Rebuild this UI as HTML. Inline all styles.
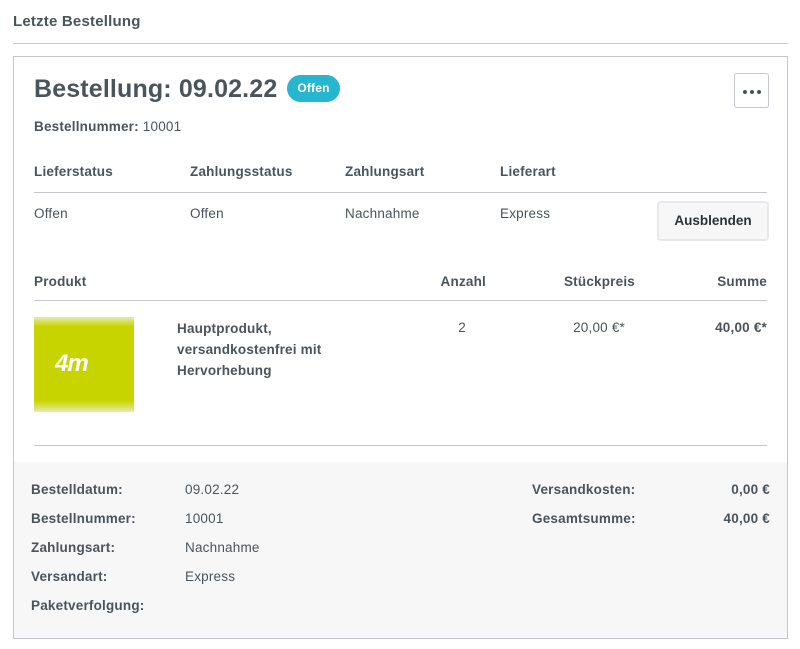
<!DOCTYPE html>
<html><head><meta charset="utf-8"><style>
*{margin:0;padding:0;box-sizing:border-box}
body{width:800px;height:649px;background:#fff;font-family:"Liberation Sans",Arial,sans-serif;color:#4a545b;position:relative;overflow:hidden}
.a{position:absolute;white-space:nowrap;font-size:13.5px;line-height:16px;letter-spacing:0.2px}
b{font-weight:bold}
.r{text-align:right}
.line{position:absolute;height:1px;background:#c4c7cc}
.dot{position:absolute;top:16px;width:4px;height:4px;border-radius:2px;background:#4a545b}
</style></head><body>
<div class="a" style="left:13px;top:14px;font-size:15px;font-weight:bold">Letzte Bestellung</div>
<div class="line" style="left:13px;top:43px;width:775px"></div>
<div style="position:absolute;left:13px;top:56px;width:775px;height:583px;border:1px solid #c4c7cc"></div>
<div style="position:absolute;left:14px;top:462px;width:773px;height:176px;background:#f7f7f7"></div>
<div class="a" style="left:34px;top:74px;font-size:25px;line-height:30px;font-weight:bold;letter-spacing:0.15px">Bestellung: 09.02.22</div>
<div class="a" style="left:287px;top:75px;width:53px;height:27px;border-radius:14px;background:#26b6cf;color:#fff;font-size:12px;font-weight:bold;line-height:27px;text-align:center">Offen</div>
<div style="position:absolute;left:734px;top:73px;width:35px;height:35px;border:1px solid #c4c7cc;border-radius:3px"><div class="dot" style="left:8px"></div><div class="dot" style="left:15px"></div><div class="dot" style="left:22px"></div></div>
<div class="a" style="left:34px;top:119px"><b>Bestellnummer:</b> 10001</div>
<div class="a" style="left:34px;top:164px"><b>Lieferstatus</b></div>
<div class="a" style="left:190px;top:164px"><b>Zahlungsstatus</b></div>
<div class="a" style="left:345px;top:164px"><b>Zahlungsart</b></div>
<div class="a" style="left:500px;top:164px"><b>Lieferart</b></div>
<div class="line" style="left:34px;top:192px;width:733px"></div>
<div class="a" style="left:34px;top:206px">Offen</div>
<div class="a" style="left:190px;top:206px">Offen</div>
<div class="a" style="left:345px;top:206px">Nachnahme</div>
<div class="a" style="left:500px;top:206px">Express</div>
<div style="position:absolute;left:657px;top:201px;width:112px;height:40px;background:#f7f7f7;border:2px solid #e8e8e8;border-radius:4px;font-size:13.5px;font-weight:bold;line-height:36px;text-align:center;color:#2b3136">Ausblenden</div>
<div class="a" style="left:34px;top:274px"><b>Produkt</b></div>
<div class="a r" style="left:386px;width:100px;top:274px"><b>Anzahl</b></div>
<div class="a r" style="left:535px;width:100px;top:274px"><b>Stückpreis</b></div>
<div class="a r" style="left:667px;width:100px;top:274px"><b>Summe</b></div>
<div class="line" style="left:34px;top:300px;width:733px"></div>
<div style="position:absolute;left:34px;top:317px;width:100px;height:95px;background:linear-gradient(#e6ecb0 0,#c8d400 10%,#c8d400 88%,#e6ecb0 100%)"></div>
<div class="a" style="left:55px;top:352px;color:#fff;font-size:24px;line-height:24px;font-style:italic;font-weight:bold;letter-spacing:-1px">4m</div>
<div class="a" style="left:177px;top:318px;line-height:21px;font-weight:bold">Hauptprodukt,<br>versandkostenfrei mit<br>Hervorhebung</div>
<div class="a r" style="left:386px;width:80px;top:320px">2</div>
<div class="a r" style="left:525px;width:100px;top:320px">20,00 €*</div>
<div class="a r" style="left:667px;width:100px;top:320px"><b>40,00 €*</b></div>
<div class="line" style="left:34px;top:445px;width:733px"></div>
<div class="a" style="left:31px;top:475px;line-height:29px"><b>Bestelldatum:<br>Bestellnummer:<br>Zahlungsart:<br>Versandart:<br>Paketverfolgung:</b></div>
<div class="a" style="left:185px;top:475px;line-height:29px">09.02.22<br>10001<br>Nachnahme<br>Express</div>
<div class="a" style="left:532px;top:475px;line-height:29px"><b>Versandkosten:<br>Gesamtsumme:</b></div>
<div class="a r" style="left:670px;width:100px;top:475px;line-height:29px"><b>0,00 €<br>40,00 €</b></div>
</body></html>
